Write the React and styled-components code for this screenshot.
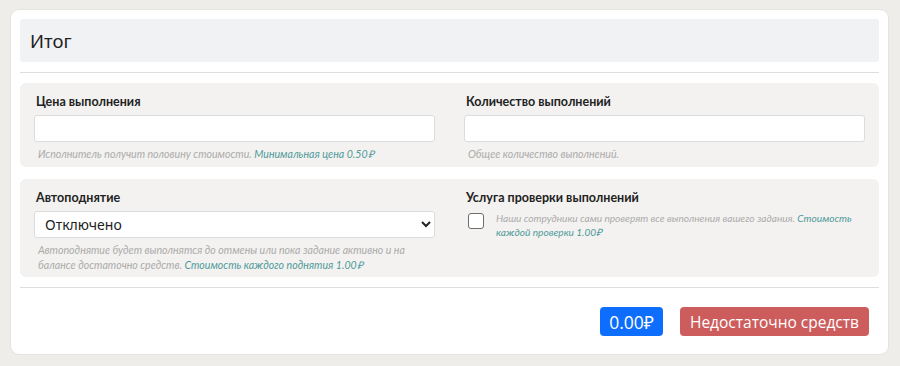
import React from "react";
import styled, { createGlobalStyle } from "styled-components";

const Global = createGlobalStyle`
  html, body { margin: 0; padding: 0; background: #eeede9; }
  body { font-family: "Lato", "Noto Sans", sans-serif; }
  * { box-sizing: border-box; }
`;

const Page = styled.div`
  padding: 9px 11px 10px 10px;
`;

const Card = styled.div`
  background: #fff;
  border: 1px solid #e4e3df;
  border-radius: 9px;
  padding: 9px 9px 18px 9px;
  display: flex;
  flex-direction: column;
`;

const Header = styled.div`
  background: #f1f2f4;
  border-radius: 3px;
  height: 43px;
  display: flex;
  align-items: center;
  padding-left: 10px;
  font-family: "Noto Sans", "Open Sans", sans-serif;
  font-size: 18.5px;
  color: #222;
`;

const Divider = styled.div`
  height: 1px;
  background: #dedede;
  margin: ${(p) => p.$m};
`;

const Section = styled.div`
  background: #f3f2f0;
  border-radius: 6px;
  padding: 10px 14px ${(p) => p.$pb}px 14px;
  display: grid;
  grid-template-columns: 1fr 1fr;
  column-gap: 29px;
  margin-top: ${(p) => p.$mt}px;
`;

const Field = styled.div`
  display: flex;
  flex-direction: column;
`;

const Label = styled.div`
  font-family: "Lato", sans-serif;
  font-weight: 700;
  font-size: 12.5px;
  line-height: 18px;
  color: #222;
  padding-left: 2px;
  margin-bottom: 4px;
`;

const Input = styled.input`
  height: 27px;
  border: 1px solid #dcdcdc;
  border-radius: 3px;
  background: #fff;
  outline: none;
  width: 100%;
`;

const Select = styled.select`
  height: 27px;
  border: 1px solid #dcdcdc;
  border-radius: 3px;
  background: #fff;
  width: 100%;
  font-family: "Noto Sans", "Open Sans", sans-serif;
  font-size: 14px;
  color: #222;
  padding-left: 6px;
  outline: none;
`;

const Hint = styled.div`
  font-family: "Lato", sans-serif;
  font-style: italic;
  font-size: ${(p) => p.$fs || 10.6}px;
  line-height: ${(p) => p.$lh || 15}px;
  color: #ababab;
  margin-top: ${(p) => p.$mt ?? 5}px;
  padding-left: ${(p) => p.$pl ?? 4}px;
`;

const Link = styled.span`
  color: #4f9a9b;
`;

const CheckRow = styled.div`
  display: flex;
  align-items: flex-start;
  gap: 12px;
  padding-left: 4px;
`;

const Check = styled.input`
  appearance: none;
  width: 16px;
  height: 16px;
  margin: 2px 0 0 0;
  border: 1.5px solid #6d6d6d;
  border-radius: 3px;
  background: #fff;
  flex-shrink: 0;
`;

const Footer = styled.div`
  display: flex;
  justify-content: flex-end;
  align-items: center;
  gap: 17px;
  padding: 0 10px 0 0;
`;

const Price = styled.div`
  background: #0d6efd;
  color: #fff;
  border-radius: 4px;
  height: 29px;
  padding: 0 9px;
  display: flex;
  align-items: center;
  font-family: "Open Sans", "Noto Sans", sans-serif;
  font-size: 17.5px;
`;

const Button = styled.button`
  background: #cd5c5c;
  color: #fff;
  border: none;
  border-radius: 4px;
  height: 29px;
  padding: 0 10px;
  font-family: "Open Sans", "Noto Sans", sans-serif;
  font-size: 15.5px;
`;

export default function App() {
  return (
    <>
      <Global />
      <Page>
        <Card>
          <Header>Итог</Header>
          <Divider $m="10px 0 10px" />
          <Section $mt={0} $pb={5}>
            <Field>
              <Label>Цена выполнения</Label>
              <Input />
              <Hint>
                Исполнитель получит половину стоимости. <Link>Минимальная цена 0.50₽</Link>
              </Hint>
            </Field>
            <Field>
              <Label>Количество выполнений</Label>
              <Input />
              <Hint>Общее количество выполнений.</Hint>
            </Field>
          </Section>
          <Section $mt={12} $pb={4}>
            <Field>
              <Label>Автоподнятие</Label>
              <Select defaultValue="off">
                <option value="off">Отключено</option>
              </Select>
              <Hint>
                Автоподнятие будет выполнятся до отмены или пока задание активно и на балансе
                достаточно средств. <Link>Стоимость каждого поднятия 1.00₽</Link>
              </Hint>
            </Field>
            <Field>
              <Label>Услуга проверки выполнений</Label>
              <CheckRow>
                <Check type="checkbox" />
                <Hint $mt={0} $lh={14} $pl={0} $fs={10.1}>
                  Наши сотрудники сами проверят все выполнения вашего задания.{" "}
                  <Link>Стоимость каждой проверки 1.00₽</Link>
                </Hint>
              </CheckRow>
            </Field>
          </Section>
          <Divider $m="10px 0 19px" />
          <Footer>
            <Price>0.00₽</Price>
            <Button>Недостаточно средств</Button>
          </Footer>
        </Card>
      </Page>
    </>
  );
}
